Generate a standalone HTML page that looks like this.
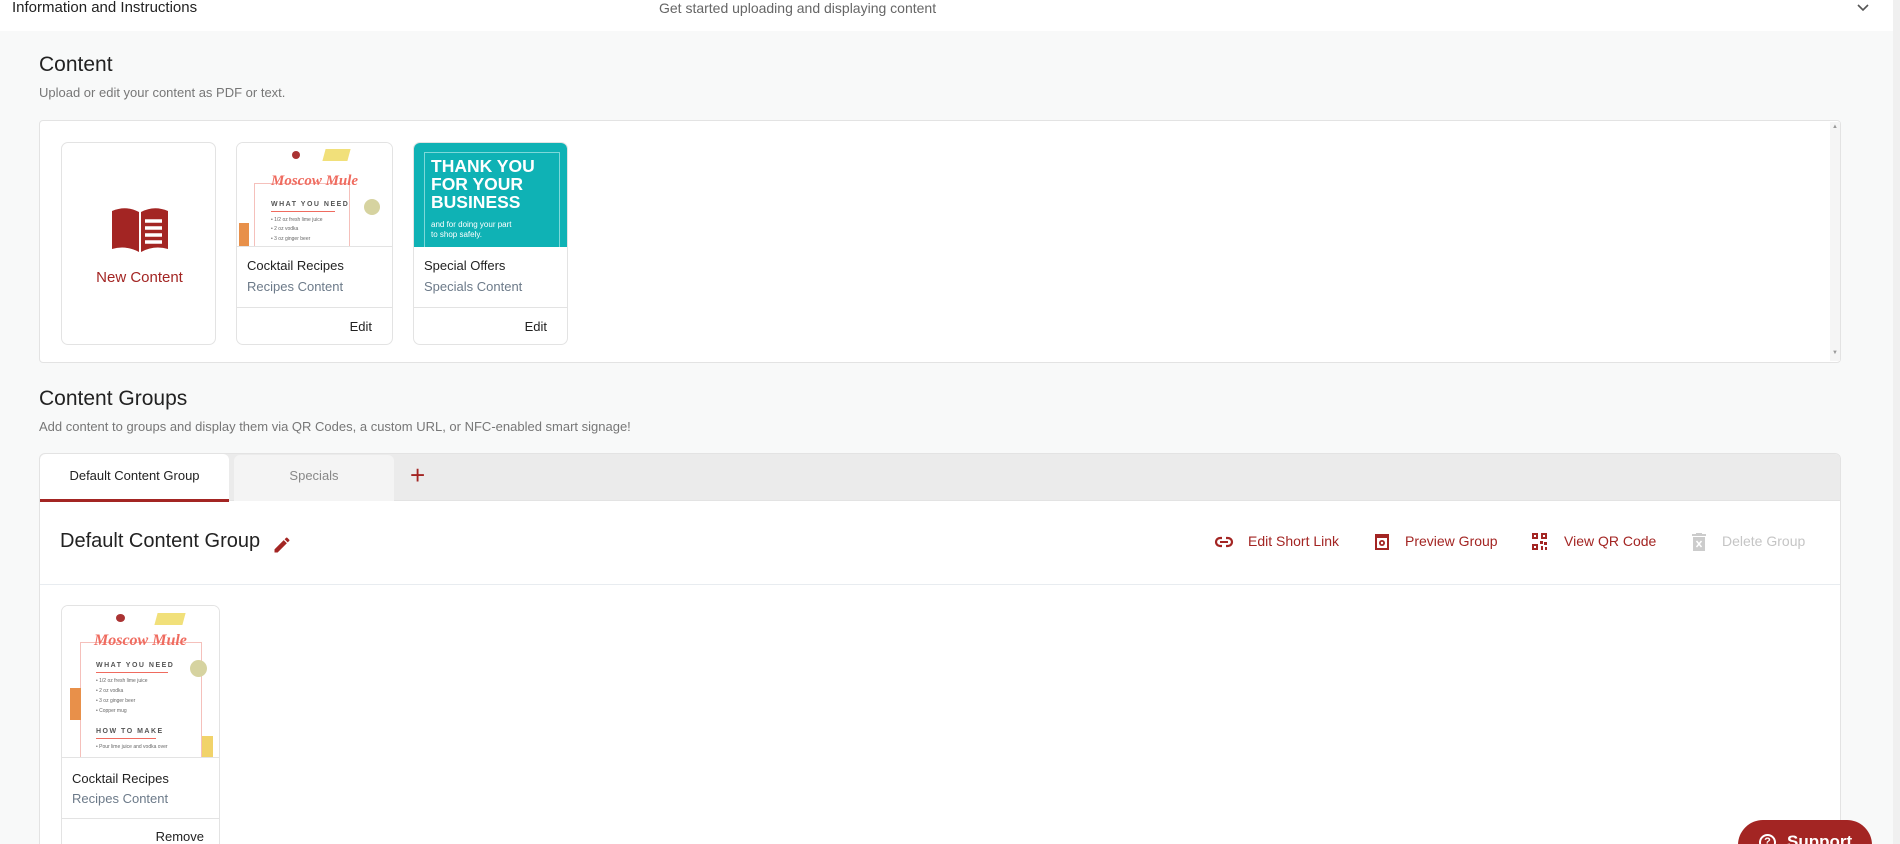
<!DOCTYPE html>
<html style="height:844px;overflow:hidden"><head><meta charset="utf-8"><style>
*{box-sizing:border-box;margin:0;padding:0}
body{width:1900px;height:844px;overflow:hidden;background:#f8f9f9;font-family:"Liberation Sans",sans-serif;position:relative;color:#222}
.abs{position:absolute}
.top{left:0;top:0;width:1893px;height:31px;background:#fff}
.sb{left:1893px;top:0;width:7px;height:844px;background:#f0f0f0}
.card{position:absolute;background:#fff;border:1px solid #e3e3e3;border-radius:7px;overflow:hidden}
.red{color:#a32523}
.act{position:absolute;top:533px;font-size:14px;color:#a32523}
.ttl{font-size:13px;color:#222}
.sub{font-size:13px;color:#6c7a89}
.recipe{position:absolute;left:0;top:0;width:100%;background:#fff;overflow:hidden;border-bottom:1px solid #e3e3e3}
.mm{position:absolute;font-family:"Liberation Serif",serif;font-style:italic;font-weight:bold;color:#ef6b5f}
.wyn{position:absolute;font-size:7px;font-weight:bold;letter-spacing:1.5px;color:#555}
.li{position:absolute;font-size:5px;color:#666}
</style></head><body>
<div class="abs top"></div>
<div class="abs" style="left:12px;top:0;font-size:15px;color:#222;line-height:16px">Information and Instructions</div>
<div class="abs" style="left:659px;top:0;font-size:14px;color:#666;line-height:16px">Get started uploading and displaying content</div>
<svg class="abs" style="left:1856px;top:3px" width="14" height="10" viewBox="0 0 14 10"><path d="M2 2l5 5 5-5" fill="none" stroke="#555" stroke-width="1.6"/></svg>
<div class="abs sb"></div>

<div class="abs" style="left:39px;top:53px;font-size:21px;color:#222">Content</div>
<div class="abs" style="left:39px;top:85px;font-size:13px;color:#777">Upload or edit your content as PDF or text.</div>
<div class="abs" style="left:39px;top:120px;width:1802px;height:243px;background:#fff;border:1px solid #e3e3e3;border-radius:4px"></div>
<div class="abs" style="left:1830px;top:122px;width:10px;height:239px;background:#f5f5f5"></div>
<div class="abs" style="left:1832px;top:124px;font-size:6px;color:#999">▲</div>
<div class="abs" style="left:1832px;top:350px;font-size:6px;color:#999">▼</div>

<div class="card" style="left:61px;top:142px;width:155px;height:203px">
<svg class="abs" style="left:50px;top:64px" width="56" height="45" viewBox="0 0 56 45"><path d="M0 4 Q14 -2 27 5 L27 45 Q14 38 0 42Z M29 5 Q42 -2 56 4 L56 42 Q42 38 29 45Z" fill="#a32523"/><path d="M33 14h17M33 21h17M33 28h17M33 35h17" stroke="#fff" stroke-width="3.5"/></svg>
<div class="abs red" style="left:0;width:155px;text-align:center;top:126px;font-size:15px">New Content</div>
</div>

<div class="card" style="left:236px;top:142px;width:157px;height:203px">
<div class="recipe" style="height:104px">
<div class="abs" style="left:55px;top:8px;width:8px;height:8px;border-radius:50%;background:#a33"></div>
<div class="abs" style="left:87px;top:6px;width:25px;height:12px;background:#f1e07a;transform:skewX(-15deg)"></div>
<div class="abs" style="left:17px;top:40px;width:96px;height:64px;border:1px solid #f5c0bb"></div>
<div class="mm" style="left:34px;top:30px;font-size:15px">Moscow Mule</div>
<div class="abs" style="left:127px;top:56px;width:16px;height:16px;border-radius:50%;background:#d6d3a0"></div>
<div class="wyn" style="left:34px;top:58px">WHAT YOU NEED</div>
<div class="abs" style="left:34px;top:68px;width:64px;height:1px;background:#ef6b5f"></div>
<div class="li" style="left:34px;top:74px">• 1/2 oz fresh lime juice</div>
<div class="li" style="left:34px;top:83px">• 2 oz vodka</div>
<div class="li" style="left:34px;top:93px">• 3 oz ginger beer</div>
<div class="abs" style="left:2px;top:80px;width:10px;height:24px;background:#e8904a"></div>
</div>
<div class="abs ttl" style="left:10px;top:115px">Cocktail Recipes</div>
<div class="abs sub" style="left:10px;top:136px">Recipes Content</div>
<div class="abs" style="left:0;top:164px;width:100%;height:1px;background:#e3e3e3"></div>
<div class="abs" style="right:20px;top:176px;font-size:13px">Edit</div>
</div>

<div class="card" style="left:413px;top:142px;width:155px;height:203px">
<div class="abs" style="left:0;top:0;width:155px;height:104px;background:#0fb2b5"></div>
<div class="abs" style="left:10px;top:9px;width:136px;height:95px;border:1px solid #7dd8d9;border-bottom:none"></div>
<div class="abs" style="left:17px;top:14px;font-size:17.5px;font-weight:bold;color:#fff;line-height:18px">THANK YOU<br>FOR YOUR<br>BUSINESS</div>
<div class="abs" style="left:17px;top:77px;font-size:8px;color:#fff;line-height:10px">and for doing your part<br>to shop safely.</div>
<div class="abs ttl" style="left:10px;top:115px">Special Offers</div>
<div class="abs sub" style="left:10px;top:136px">Specials Content</div>
<div class="abs" style="left:0;top:164px;width:100%;height:1px;background:#e3e3e3"></div>
<div class="abs" style="right:20px;top:176px;font-size:13px">Edit</div>
</div>

<div class="abs" style="left:39px;top:387px;font-size:21px;color:#222">Content Groups</div>
<div class="abs" style="left:39px;top:419px;font-size:13px;color:#777">Add content to groups and display them via QR Codes, a custom URL, or NFC-enabled smart signage!</div>

<div class="abs" style="left:39px;top:453px;width:1802px;height:400px;background:#fff;border:1px solid #e3e3e3;border-radius:6px;overflow:hidden">
<div class="abs" style="left:0;top:0;width:1802px;height:47px;background:#ebebeb;border-bottom:1px solid #e3e3e3"></div>
<div class="abs" style="left:0;top:0;width:189px;height:48px;background:#fff;border-bottom:3px solid #a32523;border-radius:6px 6px 0 0"></div>
<div class="abs" style="left:0;top:14px;width:189px;text-align:center;font-size:13px;color:#222">Default Content Group</div>
<div class="abs" style="left:194px;top:1px;width:160px;height:46px;background:#f4f4f4;border-radius:6px 6px 0 0"></div>
<div class="abs" style="left:194px;top:14px;width:160px;text-align:center;font-size:13px;color:#888">Specials</div>
<div class="abs red" style="left:370px;top:6px;font-size:26px;font-weight:300">+</div>
<div class="abs" style="left:0;top:130px;width:1802px;height:1px;background:#e8ecf0"></div>
</div>

<div class="abs" style="left:60px;top:530px;font-size:20px;color:#222">Default Content Group</div>
<svg class="abs" style="left:272px;top:535px" width="20" height="20" viewBox="0 0 24 24"><path d="M3 17.25V21h3.75L17.81 9.94l-3.75-3.75L3 17.25zM20.71 7.04a1 1 0 000-1.41l-2.34-2.34a1 1 0 00-1.41 0l-1.830 1.83 3.75 3.75 1.83-1.83z" fill="#a32523"/></svg>

<svg class="abs" style="left:1214px;top:535px" width="20" height="14" viewBox="0 0 20 14"><rect x="2" y="3" width="16" height="8" rx="4" fill="none" stroke="#a32523" stroke-width="2.2"/><rect x="8" y="1" width="4" height="12" fill="#fff"/><rect x="6" y="6" width="8" height="2" fill="#a32523"/></svg>
<div class="act" style="left:1248px">Edit Short Link</div>
<svg class="abs" style="left:1374px;top:533px" width="16" height="18" viewBox="0 0 16 18"><rect x="1" y="1" width="14" height="16" fill="#a32523"/><rect x="3" y="5" width="10" height="10" fill="#fff"/><circle cx="8" cy="10" r="3" fill="#a32523"/><circle cx="8" cy="10" r="1.2" fill="#fff"/></svg>
<div class="act" style="left:1405px">Preview Group</div>
<svg class="abs" style="left:1532px;top:533px" width="16" height="18" viewBox="0 0 16 18" fill="#a32523"><rect x="0" y="0" width="6" height="6"/><rect x="9" y="0" width="6" height="6"/><rect x="0" y="11" width="6" height="6"/><rect x="2" y="2" width="2" height="2" fill="#fff"/><rect x="11" y="2" width="2" height="2" fill="#fff"/><rect x="2" y="13" width="2" height="2" fill="#fff"/><rect x="8" y="8" width="3" height="3"/><rect x="12" y="9" width="3" height="3"/><rect x="9" y="13" width="2" height="4"/><rect x="13" y="14" width="2" height="3"/></svg>
<div class="act" style="left:1564px">View QR Code</div>
<svg class="abs" style="left:1692px;top:533px" width="14" height="18" viewBox="0 0 14 18"><rect x="0" y="1" width="14" height="2" fill="#ccc"/><rect x="4" y="0" width="6" height="2" fill="#ccc"/><rect x="1" y="4" width="12" height="14" fill="#ccc"/><path d="M4.5 8l5 6M9.5 8l-5 6" stroke="#fff" stroke-width="1.5"/></svg>
<div class="act" style="left:1722px;color:#c5c5c5">Delete Group</div>

<div class="card" style="left:61px;top:605px;width:159px;height:260px">
<div class="recipe" style="height:152px">
<div class="abs" style="left:54px;top:8px;width:9px;height:8px;border-radius:50%;background:#a33"></div>
<div class="abs" style="left:94px;top:7px;width:28px;height:12px;background:#f1e07a;transform:skewX(-15deg)"></div>
<div class="abs" style="left:18px;top:36px;width:122px;height:116px;border:1px solid #f5c0bb"></div>
<div class="mm" style="left:32px;top:26px;font-size:16px">Moscow Mule</div>
<div class="abs" style="left:128px;top:54px;width:17px;height:17px;border-radius:50%;background:#d6d3a0"></div>
<div class="wyn" style="left:34px;top:56px">WHAT YOU NEED</div>
<div class="abs" style="left:34px;top:66px;width:72px;height:1px;background:#ef6b5f"></div>
<div class="li" style="left:34px;top:72px">• 1/2 oz fresh lime juice</div>
<div class="li" style="left:34px;top:82px">• 2 oz vodka</div>
<div class="li" style="left:34px;top:92px">• 3 oz ginger beer</div>
<div class="li" style="left:34px;top:102px">• Copper mug</div>
<div class="wyn" style="left:34px;top:122px">HOW TO MAKE</div>
<div class="abs" style="left:34px;top:132px;width:60px;height:1px;background:#ef6b5f"></div>
<div class="li" style="left:34px;top:138px">• Pour lime juice and vodka over</div>
<div class="abs" style="left:8px;top:82px;width:11px;height:32px;background:#e8904a"></div>
<div class="abs" style="left:140px;top:130px;width:11px;height:22px;background:#f1d36a"></div>
</div>
<div class="abs ttl" style="left:10px;top:165px">Cocktail Recipes</div>
<div class="abs sub" style="left:10px;top:185px">Recipes Content</div>
<div class="abs" style="left:0;top:212px;width:100%;height:1px;background:#e3e3e3"></div>
<div class="abs" style="right:15px;top:223px;font-size:13px">Remove</div>
</div>

<div class="abs" style="left:1738px;top:820px;width:134px;height:50px;background:#a32523;border-radius:25px"></div>
<div class="abs" style="left:1759px;top:834px;width:17px;height:17px;border:2px solid #fff;border-radius:50%;color:#fff;font-size:11px;font-weight:bold;text-align:center;line-height:13px">?</div>
<div class="abs" style="left:1787px;top:832px;color:#fff;font-size:17px;font-weight:bold">Support</div>
</body></html>
